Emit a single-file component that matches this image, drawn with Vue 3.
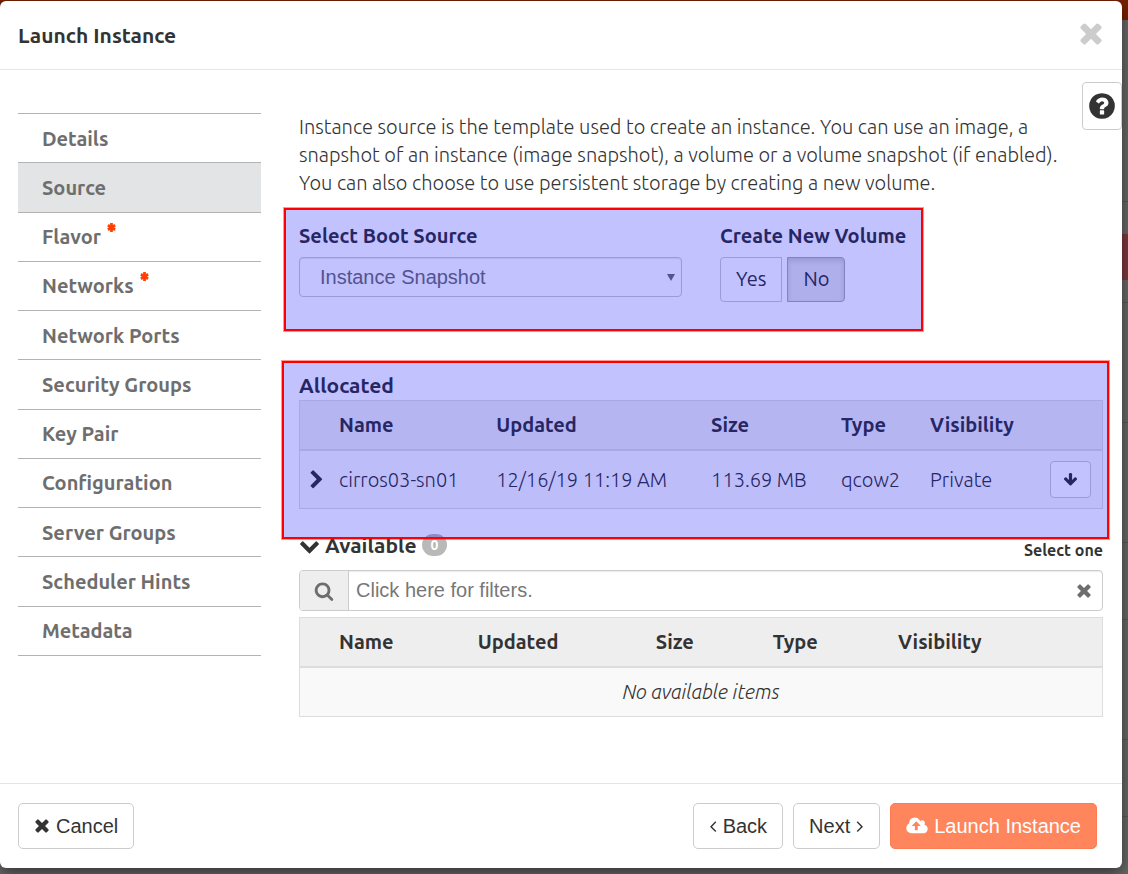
<script setup>
import { ref } from 'vue'

const icons = {
  times: { box: '192 64 1408 1792', d: 'M1490 1322q0 40-28 68l-136 136q-28 28-68 28t-68-28l-294-294-294 294q-28 28-68 28t-68-28l-136-136q-28-28-28-68t28-68l294-294-294-294q-28-28-28-68t28-68l136-136q28-28 68-28t68 28l294 294 294-294q28-28 68-28t68 28l136 136q28 28 28 68t-28 68l-294 294 294 294q28 28 28 68z' },
  help: { box: '0 0 1792 1792', d: 'M1024 1376v-192q0-14-9-23t-23-9h-192q-14 0-23 9t-9 23v192q0 14 9 23t23 9h192q14 0 23-9t9-23zm256-672q0-88-55.500-163t-138.500-116-170-41q-243 0-371 213-15 24 8 42l132 100q7 6 19 6 16 0 25-12 53-68 86-92 34-24 86-24 48 0 85.500 26t37.500 59q0 38-20 61t-68 45q-63 28-115.500 86.500t-52.500 125.500v36q0 14 9 23t23 9h192q14 0 23-9t9-23q0-19 21.500-49.500t54.500-49.500q32-18 49-28.500t46-35 44.500-48 28-60.500 12.500-81zm384 192q0 209-103 385.500t-279.500 279.500-385.500 103-385.500-103-279.500-279.500-103-385.500 103-385.500 279.500-279.500 385.500-103 385.500 103 279.500 279.500 103 385.500z' },
  search: { box: '0 0 1792 1792', d: 'M1216 832q0-185-131.500-316.500t-316.500-131.500-316.500 131.500-131.500 316.500 131.500 316.500 316.500 131.500 316.500-131.500 131.500-316.500zm512 832q0 52-38 90t-90 38q-54 0-90-38l-343-342q-179 124-399 124-143 0-273.500-55.500t-225-150-150-225-55.500-273.500 55.500-273.500 150-225 225-150 273.500-55.500 273.500 55.500 225 150 150 225 55.500 273.500q0 220-124 399l343 343q37 37 37 90z' },
  right: { box: '128 0 1408 1792', d: 'M1363 877l-742 742q-19 19-45 19t-45-19l-166-166q-19-19-19-45t19-45l531-531-531-531q-19-19-19-45t19-45l166-166q19-19 45-19t45 19l742 742q19 19 19 45t-19 45z' },
  down: { box: '0 0 1792 1792', d: 'M1683 808l-742 741q-19 19-45 19t-45-19l-742-741q-19-19-19-45.500t19-45.500l166-165q19-19 45-19t45 19l531 531 531-531q19-19 45-19t45 19l166 165q19 19 19 45.500t-19 45.500z' },
  angleLeft: { box: '512 0 768 1792', d: 'M1203 544q0 13-10 23l-393 393 393 393q10 10 10 23t-10 23l-50 50q-10 10-23 10t-23-10l-466-466q-10-10-10-23t10-23l466-466q10-10 23-10t23 10l50 50q10 10 10 23z' },
  angleRight: { box: '512 0 768 1792', d: 'M1171 960q0 13-10 23l-466 466q-10 10-23 10t-23-10l-50-50q-10-10-10-23t10-23l393-393-393-393q-10-10-10-23t10-23l50-50q10-10 23-10t23 10l466 466q10 10 10 23z' },
  arrowDown: { box: '0 0 1792 1792', d: 'M1675 832q0 53-37 90l-651 652q-39 37-91 37-53 0-90-37l-651-652q-38-36-38-90 0-53 38-91l74-75q39-37 91-37 53 0 90 37l294 294v-704q0-52 38-90t90-38h128q52 0 90 38t38 90v704l294-294q37-37 90-37 52 0 91 37l75 75q37 39 37 91z' },
  cloud: { box: '-64 0 1920 1792', d: 'M1216 864q0-14-9-23l-352-352q-9-9-23-9t-23 9l-351 351q-10 12-10 24 0 14 9 23t23 9h224v352q0 13 9.500 22.500t22.500 9.500h192q13 0 22.500-9.500t9.500-22.500v-352h224q13 0 22.500-9.500t9.500-22.500zm640 288q0 159-112.500 271.500t-271.500 112.500h-1088q-185 0-316.500-131.500t-131.500-316.500q0-130 70-240t188-165q-2-30-2-43 0-212 150-362t362-150q156 0 285.500 87t188.500 231q71-62 166-62 106 0 181 75t75 181q0 76-41 138 130 31 213.500 135.500t83.500 238.500z' }
}

const steps = [
  { label: 'Details' },
  { label: 'Source', active: true },
  { label: 'Flavor', required: true },
  { label: 'Networks', required: true },
  { label: 'Network Ports' },
  { label: 'Security Groups' },
  { label: 'Key Pair' },
  { label: 'Configuration' },
  { label: 'Server Groups' },
  { label: 'Scheduler Hints' },
  { label: 'Metadata' }
]

const columns = ['Name', 'Updated', 'Size', 'Type', 'Visibility']
const allocated = [
  { name: 'cirros03-sn01', updated: '12/16/19 11:19 AM', size: '113.69 MB', type: 'qcow2', visibility: 'Private' }
]

const bootSource = ref('Instance Snapshot')
const createVolume = ref(false)
const filter = ref('')
</script>

<template>
  <div class="page">
    <div class="backdrop" aria-hidden="true">
      <div class="topbar"></div>
      <div class="band first"></div>
      <div class="band alert"></div>
      <div class="band short"></div>
      <div class="band tall"></div>
      <div class="band tall"></div>
      <div class="band mid"></div>
      <div class="band tall"></div>
      <div class="band mid"></div>
    </div>

    <div class="modal" role="dialog" aria-labelledby="dialog-title">
      <header class="modal-header">
        <h1 id="dialog-title">Launch Instance</h1>
        <button class="close" type="button" aria-label="Close">
          <svg :viewBox="icons.times.box"><path :d="icons.times.d" /></svg>
        </button>
      </header>

      <div class="modal-body">
        <button class="help" type="button" aria-label="Help">
          <svg :viewBox="icons.help.box"><path :d="icons.help.d" /></svg>
        </button>

        <nav class="steps">
          <ul>
            <li v-for="step in steps" :key="step.label" :class="{ active: step.active }">
              <a href="#">{{ step.label }}<svg v-if="step.required" class="required" viewBox="0 0 10 10" role="img" aria-label="required"><path d="M5 0v10M1 2.500l8 5M9 2.500l-8 5" /></svg></a>
            </li>
          </ul>
        </nav>

        <main class="content">
          <p class="intro">Instance source is the template used to create an instance. You can use an image, a snapshot of an instance (image snapshot), a volume or a volume snapshot (if enabled). You can also choose to use persistent storage by creating a new volume.</p>

          <section class="boot marked">
            <div class="field source">
              <label for="boot-source">Select Boot Source</label>
              <div class="select-wrap">
                <select id="boot-source" v-model="bootSource">
                  <option>Image</option>
                  <option>Instance Snapshot</option>
                  <option>Volume</option>
                  <option>Volume Snapshot</option>
                </select>
                <svg class="caret" viewBox="0 0 8 7"><path d="M0 0h8L4 7z" /></svg>
              </div>
            </div>
            <div class="field volume" role="group" aria-labelledby="volume-label">
              <span id="volume-label" class="label">Create New Volume</span>
              <div class="toggle">
                <button type="button" :class="{ on: createVolume }" @click="createVolume = true">Yes</button>
                <button type="button" :class="{ on: !createVolume }" @click="createVolume = false">No</button>
              </div>
            </div>
          </section>

          <section class="allocated marked">
            <h2>Allocated</h2>
            <table class="allocated-table">
              <colgroup>
                <col class="c-toggle"><col class="c-name"><col class="c-updated"><col class="c-size"><col class="c-type"><col class="c-visibility"><col class="c-action">
              </colgroup>
              <thead>
                <tr>
                  <th></th>
                  <th v-for="c in columns" :key="c" scope="col">{{ c }}</th>
                  <th></th>
                </tr>
              </thead>
              <tbody>
                <tr v-for="row in allocated" :key="row.name">
                  <td class="expander">
                    <button class="expand" type="button" aria-label="Expand row">
                      <svg :viewBox="icons.right.box"><path :d="icons.right.d" /></svg>
                    </button>
                  </td>
                  <td>{{ row.name }}</td>
                  <td>{{ row.updated }}</td>
                  <td>{{ row.size }}</td>
                  <td>{{ row.type }}</td>
                  <td>{{ row.visibility }}</td>
                  <td class="action">
                    <button class="move" type="button" aria-label="Remove from allocated">
                      <svg :viewBox="icons.arrowDown.box"><path :d="icons.arrowDown.d" /></svg>
                    </button>
                  </td>
                </tr>
              </tbody>
            </table>
          </section>

          <section class="available">
            <div class="available-head">
              <h2>
                <svg class="chevron" :viewBox="icons.down.box"><path :d="icons.down.d" /></svg>
                <span>Available</span>
                <span class="badge">0</span>
              </h2>
              <span class="hint">Select one</span>
            </div>
            <div class="search">
              <span class="addon"><svg :viewBox="icons.search.box"><path :d="icons.search.d" /></svg></span>
              <input v-model="filter" type="text" placeholder="Click here for filters." aria-label="Click here for filters.">
              <button class="clear" type="button" aria-label="Clear filters">
                <svg :viewBox="icons.times.box"><path :d="icons.times.d" /></svg>
              </button>
            </div>
            <table class="available-table">
              <colgroup>
                <col class="c-toggle"><col class="c-name"><col class="c-updated"><col class="c-size"><col class="c-type"><col class="c-visibility">
              </colgroup>
              <thead>
                <tr>
                  <th></th>
                  <th v-for="c in columns" :key="c" scope="col">{{ c }}</th>
                </tr>
              </thead>
              <tbody>
                <tr><td class="empty" colspan="6">No available items</td></tr>
              </tbody>
            </table>
          </section>
        </main>
      </div>

      <footer class="modal-footer">
        <button class="btn cancel" type="button">
          <svg class="i-times" :viewBox="icons.times.box"><path :d="icons.times.d" /></svg>Cancel
        </button>
        <button class="btn" type="button">
          <svg class="i-angle" :viewBox="icons.angleLeft.box"><path :d="icons.angleLeft.d" /></svg>Back
        </button>
        <button class="btn" type="button">
          Next<svg class="i-angle" :viewBox="icons.angleRight.box"><path :d="icons.angleRight.d" /></svg>
        </button>
        <button class="btn primary" type="button">
          <svg class="i-cloud" :viewBox="icons.cloud.box"><path :d="icons.cloud.d" /></svg>Launch Instance
        </button>
      </footer>
    </div>
  </div>
</template>

<style>
body {
  background: #5c5c5c;
}
</style>

<style scoped>
* {
  box-sizing: border-box;
}

.page {
  position: relative;
  min-height: 100vh;
  padding: 1px 6px 6px 0;
  overflow: hidden;
  color: #333;
  font: 300 20px/28px Ubuntu, "Open Sans", sans-serif;
}

svg {
  display: block;
  fill: currentColor;
}

button {
  padding: 0;
  border: 0;
  background: none;
  color: inherit;
  font: inherit;
  cursor: pointer;
}

.backdrop {
  position: absolute;
  inset: 0;
  background: #686868;
}

.topbar {
  height: 20px;
  background: #772000;
}

.band {
  border-bottom: 1px solid #5a5a5a;
}

.band.first {
  height: 182px;
}

.band.alert {
  height: 46px;
  margin-top: 32px;
  border: 0;
  background: #7c3a3c;
}

.band.short {
  height: 23px;
}

.band.mid {
  height: 77px;
}

.band.tall {
  height: 120px;
}

.modal {
  position: relative;
  border-radius: 6px;
  background: #fff;
  box-shadow: 0 5px 15px rgba(0, 0, 0, 0.5);
}

.modal-header {
  display: flex;
  align-items: center;
  justify-content: space-between;
  height: 69px;
  padding: 0 18px;
  border-bottom: 1px solid #e5e5e5;
}

h1,
h2 {
  margin: 0;
  font-size: 21px;
  font-weight: 600;
  line-height: 28px;
}

.close {
  padding-bottom: 3px;
  color: #ccc;
}

.close svg {
  width: 26px;
  height: 32px;
}

.modal-body {
  position: relative;
  display: flex;
  gap: 38px;
  padding: 43px 19px 66px 18px;
}

.help {
  position: absolute;
  top: 12px;
  right: 0;
  padding: 8px 4px;
  border: 1px solid #ccc;
  border-radius: 4px;
  background: #fff;
}

.help svg {
  width: 30px;
  height: 30px;
}

.steps {
  flex: 0 0 243px;
}

.steps ul {
  display: flex;
  flex-direction: column;
  min-height: 543px;
  margin: 0;
  padding: 0;
  border-top: 1px solid #b3b3b3;
  list-style: none;
}

.steps li {
  display: flex;
  flex: 1;
  align-items: center;
  border-bottom: 1px solid #b3b3b3;
}

.steps li.active {
  background: #e2e4e5;
}

.steps a {
  display: flex;
  flex: 1;
  gap: 6px;
  padding: 1px 24px 0;
  color: #6e6e6e;
  font-weight: 700;
  text-decoration: none;
}

.required {
  width: 9px;
  height: 9px;
  fill: none;
  stroke: #ff4000;
  stroke-width: 3;
}

.content {
  flex: 1;
  min-width: 0;
}

.intro {
  max-width: 770px;
  margin: 0;
}

.marked {
  position: relative;
}

.marked::after {
  position: absolute;
  border: 2px solid #f00;
  background: rgba(0, 0, 255, 0.24);
  box-shadow: 0 0 0 1px rgba(255, 0, 0, 0.4);
  content: "";
  pointer-events: none;
}

.boot {
  display: flex;
  gap: 38px;
  width: 609px;
  margin-top: 25px;
}

.boot::after {
  inset: -14px -15px -29px -15px;
}

.source {
  flex: 1;
}

.volume {
  min-width: 188px;
}

.field label,
.label {
  display: block;
  margin-bottom: 7px;
  font-weight: 700;
}

.select-wrap {
  position: relative;
}

select {
  display: block;
  width: 100%;
  height: 40px;
  padding: 0 20px;
  border: 1px solid #ccc;
  border-radius: 4px;
  background: #fff;
  box-shadow: inset 0 1px 1px rgba(0, 0, 0, 0.08);
  color: #6e6e6e;
  font: 20px "Liberation Sans", Arial, sans-serif;
  appearance: none;
}

.caret {
  position: absolute;
  top: 17px;
  right: 7px;
  width: 8px;
  height: 7px;
  fill: #6e6e6e;
}

.toggle {
  display: flex;
  gap: 5px;
}

.toggle button {
  height: 45px;
  padding: 0 15px 1px;
  border: 1px solid #ccc;
  border-radius: 4px 0 0 4px;
  background: #fff;
  font-weight: 400;
}

.toggle button + button {
  border-radius: 0 4px 4px 0;
}

.toggle button.on {
  border-color: #adadad;
  background: #e6e6e6;
  box-shadow: inset 0 3px 5px rgba(0, 0, 0, 0.125);
}

.allocated {
  margin-top: 69px;
}

.allocated::after {
  inset: -10px -6px -30px -17px;
}

table {
  width: 100%;
  border: 1px solid #ddd;
  border-collapse: separate;
  border-spacing: 0;
  table-layout: fixed;
  background: #f9f9f9;
}

th {
  height: 50px;
  padding: 0 10px;
  border-bottom: 2px solid #ddd;
  background: #eee;
  font-weight: 700;
  text-align: left;
}

td {
  height: 48px;
  padding: 0 10px;
}

.allocated-table {
  margin-top: 1px;
}

.allocated-table td {
  height: 57px;
  white-space: nowrap;
}

.c-toggle {
  width: 29px;
}

.allocated-table .c-name {
  width: 19.6%;
}

.allocated-table .c-updated {
  width: 26.8%;
}

.allocated-table .c-size {
  width: 16.2%;
}

.allocated-table .c-type {
  width: 11.1%;
}

.available-table .c-name {
  width: 17.3%;
}

.available-table .c-updated {
  width: 22.2%;
}

.available-table .c-size {
  width: 14.6%;
}

.available-table .c-type {
  width: 15.6%;
}

.c-action {
  width: 62px;
}

td.expander {
  padding: 0 0 0 8px;
}

.expand {
  display: block;
}

.expand svg {
  width: 16px;
  height: 20px;
}

.move {
  display: flex;
  align-items: center;
  justify-content: center;
  width: 41px;
  height: 37px;
  border: 1px solid #ccc;
  border-radius: 4px;
  background: #fff;
}

.move svg {
  width: 15px;
  height: 15px;
}

.available {
  margin-top: 22px;
}

.available-head {
  display: flex;
  align-items: flex-end;
  justify-content: space-between;
}

.available h2 {
  display: flex;
  align-items: center;
  gap: 5px;
}

.chevron {
  width: 21px;
  height: 21px;
}

.badge {
  padding: 0 9px;
  border-radius: 11px;
  background: #b9b9b9;
  color: #fff;
  font-size: 14px;
  font-weight: 700;
  line-height: 22px;
}

.hint {
  font-size: 16px;
  font-weight: 600;
  line-height: 18px;
}

.search {
  display: flex;
  height: 41px;
  margin: 11px 0 6px;
  overflow: hidden;
  border: 1px solid #ccc;
  border-radius: 4px;
  background: #fff;
  box-shadow: inset 0 1px 1px rgba(0, 0, 0, 0.08);
}

.addon {
  display: flex;
  align-items: center;
  justify-content: center;
  width: 49px;
  border-right: 1px solid #ccc;
  background: #eee;
  color: #6e6e6e;
}

.addon svg {
  width: 20px;
  height: 20px;
}

.search input {
  flex: 1;
  min-width: 0;
  padding: 0 7px;
  border: 0;
  background: none;
  color: #333;
  font: 20px "Liberation Sans", Arial, sans-serif;
}

.search input::placeholder {
  color: #777;
}

.clear {
  padding: 0 10px;
  color: #6e6e6e;
}

.clear svg {
  width: 16px;
  height: 20px;
}

.empty {
  font-style: italic;
  text-align: center;
}

.modal-footer {
  display: flex;
  gap: 10px;
  padding: 19px 25px 19px 18px;
  border-top: 1px solid #e5e5e5;
}

.btn {
  display: flex;
  align-items: center;
  gap: 6px;
  height: 46px;
  padding: 0 15px;
  border: 1px solid #ccc;
  border-radius: 5px;
  background: #fff;
  font: 20px "Liberation Sans", Arial, sans-serif;
}

.cancel {
  margin-right: auto;
}

.primary {
  border-color: #ff7a50;
  background: #ff855c;
  color: #fff;
}

.i-times {
  width: 16px;
  height: 20px;
}

.i-angle {
  width: 8px;
  height: 20px;
}

.i-cloud {
  width: 22px;
  height: 20px;
}
</style>
